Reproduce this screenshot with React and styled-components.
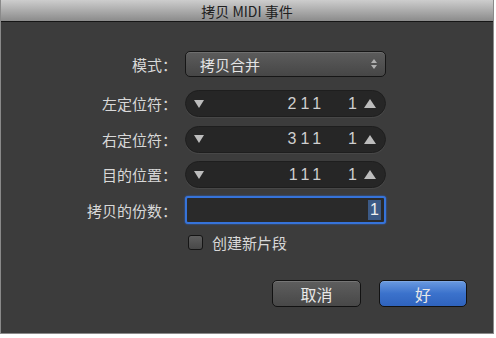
import React from 'react';
import styled, { createGlobalStyle } from 'styled-components';

const GlobalStyle = createGlobalStyle`
  html, body {
    margin: 0;
    padding: 0;
    background: #ffffff;
  }
  body {
    font-family: "Noto Sans CJK SC", "Noto Sans", sans-serif;
  }
`;

const Window = styled.div`
  width: 494px;
  height: 334px;
  box-sizing: border-box;
  border: 1px solid #8a8a8a;
  border-top: none;
  background: #3c3c3c;
  display: flex;
  flex-direction: column;
`;

const TitleBar = styled.div`
  height: 21px;
  flex: none;
  border-bottom: 1px solid #151515;
  background: linear-gradient(#cdcdcd, #8b8b8b);
  display: flex;
  align-items: center;
  justify-content: center;
  font-size: 14px;
  color: #202020;
  line-height: 1;
`;

const Body = styled.div`
  flex: 1;
  display: flex;
  flex-direction: column;
  padding: 29px 26px 0 0;
`;

const Row = styled.div`
  display: grid;
  grid-template-columns: 176px 201px;
  column-gap: 8px;
  align-items: center;
  height: ${(p) => p.h}px;
  margin-top: ${(p) => p.mt || 0}px;
`;

const Label = styled.div`
  text-align: right;
  font-size: 15px;
  color: #d8d8d8;
  line-height: 1;
`;

const Popup = styled.div`
  height: 26px;
  box-sizing: border-box;
  border: 1px solid #161616;
  border-radius: 5px;
  background: linear-gradient(#5c5c5c, #464646);
  box-shadow: inset 0 1px 0 rgba(255, 255, 255, 0.12);
  display: flex;
  align-items: center;
  justify-content: space-between;
  padding: 0 8px 0 14px;
  font-size: 15px;
  color: #e4e4e4;
`;

const UpDown = styled.div`
  display: flex;
  flex-direction: column;
  gap: 2px;
`;

const Tri = styled.div`
  width: 0;
  height: 0;
  border-left: ${(p) => p.s}px solid transparent;
  border-right: ${(p) => p.s}px solid transparent;
  ${(p) =>
    p.up
      ? `border-bottom: ${p.hh}px solid ${p.c};`
      : `border-top: ${p.hh}px solid ${p.c};`}
`;

const Stepper = styled.div`
  height: 27px;
  box-sizing: border-box;
  border-radius: 14px;
  background: #262626;
  border: 1px solid #1e1e1e;
  box-shadow: 0 1px 0 rgba(255, 255, 255, 0.06);
  display: flex;
  align-items: center;
  padding: 0 9px 0 8px;
`;

const Value = styled.div`
  flex: 1;
  display: flex;
  justify-content: flex-end;
  align-items: center;
  gap: 23px;
  padding-right: 3px;
  font-family: "Liberation Sans", Arial, sans-serif;
  font-size: 16px;
  color: #cfcfcf;
  letter-spacing: 4px;
`;

const TextField = styled.div`
  height: 28px;
  box-sizing: border-box;
  border: 2px solid #3673d9;
  border-radius: 3px;
  background: #2a2a2a;
  box-shadow: 0 0 2px #2d6ad6;
  display: flex;
  align-items: center;
  justify-content: flex-end;
  padding: 0 3px;
`;

const Selected = styled.span`
  background: #3c5a86;
  color: #f0f0f0;
  font-family: "Liberation Sans", Arial, sans-serif;
  font-size: 16px;
  line-height: 20px;
  padding: 0 2px;
`;

const CheckRow = styled.div`
  display: flex;
  align-items: center;
  gap: 9px;
  margin: 10px 0 0 187px;
  height: 16px;
  font-size: 15px;
  color: #d8d8d8;
`;

const Box = styled.div`
  width: 15px;
  height: 15px;
  box-sizing: border-box;
  border: 1px solid #151515;
  border-radius: 3px;
  background: linear-gradient(#5e5e5e, #484848);
`;

const Buttons = styled.div`
  display: flex;
  justify-content: flex-end;
  gap: 18px;
  margin-top: 30px;
`;

const Button = styled.div`
  width: ${(p) => p.w}px;
  height: 27px;
  box-sizing: border-box;
  border: 1px solid #121212;
  border-radius: 5px;
  background: ${(p) =>
    p.primary
      ? 'linear-gradient(#6a9ae0, #3b72cc 50%, #2f63bd)'
      : 'linear-gradient(#5e5e5e, #484848)'};
  box-shadow: inset 0 1px 0 rgba(255, 255, 255, 0.15);
  display: flex;
  align-items: center;
  justify-content: center;
  font-size: 16px;
  color: #e8e8e8;
`;

const StepperField = ({ value, last }) => (
  <Stepper>
    <Tri s={5} hh={8} c="#bdbdbd" />
    <Value>
      <span>{value}</span>
      <span>{last}</span>
    </Value>
    <Tri up s={6} hh={9} c="#bdbdbd" />
  </Stepper>
);

export default function App() {
  return (
    <>
      <GlobalStyle />
      <Window>
        <TitleBar>拷贝 MIDI 事件</TitleBar>
        <Body>
          <Row h={26}>
            <Label>模式：</Label>
            <Popup>
              <span>拷贝合并</span>
              <UpDown>
                <Tri up s={3} hh={4} c="#b0b0b0" />
                <Tri s={3} hh={4} c="#b0b0b0" />
              </UpDown>
            </Popup>
          </Row>
          <Row h={27} mt={13}>
            <Label>左定位符：</Label>
            <StepperField value="211" last="1" />
          </Row>
          <Row h={27} mt={8.5}>
            <Label>右定位符：</Label>
            <StepperField value="311" last="1" />
          </Row>
          <Row h={27} mt={8.5}>
            <Label>目的位置：</Label>
            <StepperField value="111" last="1" />
          </Row>
          <Row h={28} mt={8}>
            <Label>拷贝的份数：</Label>
            <TextField>
              <Selected>1</Selected>
            </TextField>
          </Row>
          <CheckRow>
            <Box />
            <span>创建新片段</span>
          </CheckRow>
          <Buttons>
            <Button w={89}>取消</Button>
            <Button w={88} primary>好</Button>
          </Buttons>
        </Body>
      </Window>
    </>
  );
}
